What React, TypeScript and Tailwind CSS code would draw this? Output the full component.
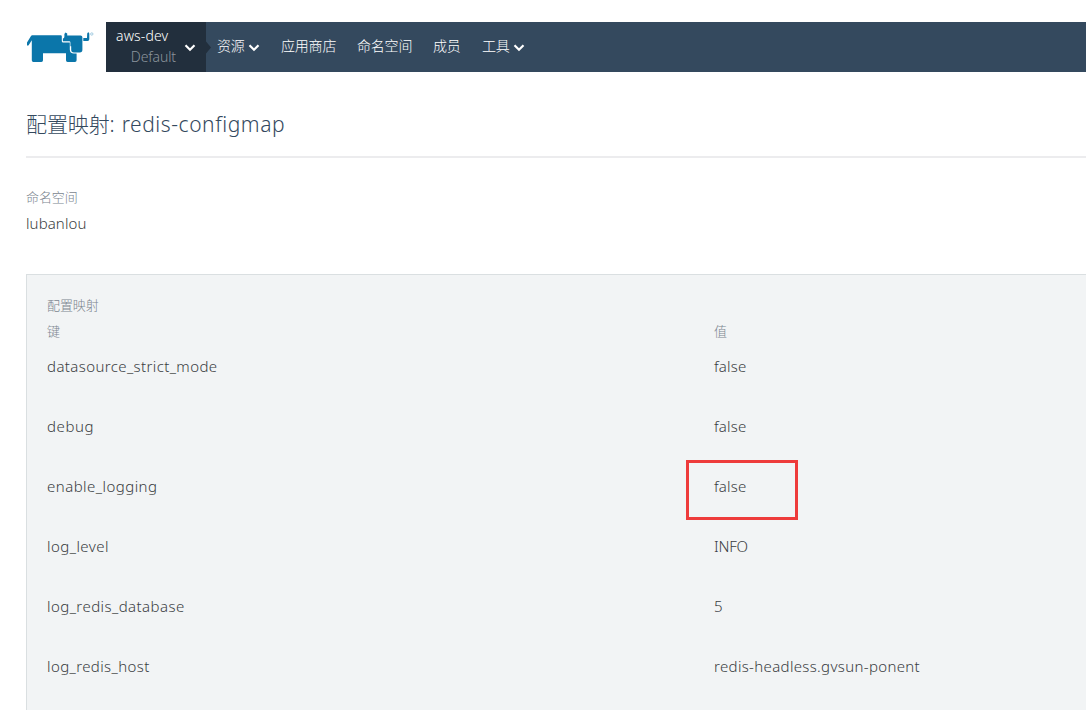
import React from "react";

const LATIN = "font-['Noto_Sans','Noto_Sans_CJK_SC',sans-serif]";

type Entry = { key: string; keyTracking: string; value: string; valueTracking: string; marked?: boolean };

const entries: Entry[] = [
  { key: "datasource_strict_mode", keyTracking: "tracking-[0.39px]", value: "false", valueTracking: "tracking-[0.2px]" },
  { key: "debug", keyTracking: "tracking-[0.6px]", value: "false", valueTracking: "tracking-[0.2px]" },
  { key: "enable_logging", keyTracking: "tracking-[0.46px]", value: "false", valueTracking: "tracking-[0.2px]", marked: true },
  { key: "log_level", keyTracking: "tracking-[0.45px]", value: "INFO", valueTracking: "tracking-[-0.2px]" },
  { key: "log_redis_database", keyTracking: "tracking-[0.44px]", value: "5", valueTracking: "tracking-normal" },
  { key: "log_redis_host", keyTracking: "tracking-[0.39px]", value: "redis-headless.gvsun-ponent", valueTracking: "tracking-[0.34px]" },
];

function Logo() {
  return (
    <svg className="block h-[50px] w-[106px] shrink-0" viewBox="0 22 106 50" aria-label="Rancher">
      <g fill="#0b76aa">
        <path d="M32.2 35.2H60.8Q61.8 35.2 61.8 36.2V41.2Q61.8 42.6 63.2 42.6H69.8V49.6Q69.8 53.6 73.8 53.6H76.6V60.3Q76.6 61.9 75 61.9H67.6Q66 61.9 66 60.3V53.2H43V60.3Q43 61.9 41.4 61.9H33.4Q31.8 61.9 31.8 60.3V40.2L28.6 45.2Q27.6 46.2 27 45V42.4L31 36Q31.5 35.2 32.2 35.2Z" />
        <path d="M64.4 34L65.4 32.4L67.2 33.6V35.4H80.6Q82.4 35.4 82.4 37.2V49.8Q82.4 52.4 79.8 52.4H73.8Q71.2 52.4 71.2 49.8V46.2H70.4V42.4Q70.4 41.2 69.2 41.2H62.9V38.6Q64.4 38.4 64.4 36.6Z" />
        <path d="M83.3 38H87L87.2 33.6L88.2 32L89.3 33.6V39.2Q89.3 40.9 87.6 40.9H83.3Z" />
      </g>
      <circle cx="91.8" cy="34" r="1.2" fill="none" stroke="#8fc0da" strokeWidth="0.8" />
    </svg>
  );
}

function Chevron() {
  return (
    <svg className="block h-[8px] w-[12px] shrink-0" viewBox="0 0 12 8" fill="none" stroke="#fff" strokeWidth="2.2">
      <path d="M1.5 1.3L6 5.8L10.5 1.3" />
    </svg>
  );
}

function Header() {
  return (
    <header className="flex h-[50px] w-full">
      <Logo />
      <div className="flex h-full flex-1 bg-[#34495e] text-white">
        <div className="flex h-full w-[100px] shrink-0 items-center bg-[#222f3d]">
          <div className="w-[70px] pb-[3px] pl-[10px] text-[14px] leading-[21px]">
            <div className="whitespace-nowrap tracking-[0.15px]">aws-dev</div>
            <div className="text-right font-light tracking-[-0.1px] text-[#8b949c]">Default</div>
          </div>
          <div className="pl-[8px] pt-px">
            <Chevron />
          </div>
        </div>
        <svg className="h-full w-[6px] shrink-0" viewBox="0 0 6 50">
          <path d="M0 19.5L5 25.5L0 31.5Z" fill="#222f3d" />
        </svg>
        <nav className="flex items-center whitespace-nowrap pb-[2px] pl-[5px] text-[14px] leading-5">
          <span className="flex w-[64px] items-center gap-[3px] tracking-[-0.2px]">资源<span className="pt-[3px]"><Chevron /></span></span>
          <span className="w-[76px] tracking-[-0.2px]">应用商店</span>
          <span className="w-[76px] tracking-[-0.2px]">命名空间</span>
          <span className="w-[49px] tracking-[-0.2px]">成员</span>
          <span className="flex items-center gap-[3px] tracking-[-0.2px]">工具<span className="pt-[3px]"><Chevron /></span></span>
        </nav>
      </div>
    </header>
  );
}

export default function App() {
  return (
    <div className={`h-[710px] w-full overflow-hidden bg-white pt-[22px] text-[15px] font-light text-[#3a3d42] ${LATIN}`}>
      <Header />
      <main className="pl-[26px]">
        <h1 className="flex h-[86px] items-center gap-[7px] whitespace-nowrap border-b-2 border-[#ececee] pt-[20px] text-[21px] leading-[30px] text-[#34495e]">
          <span className="tracking-[-0.1px]">配置映射:</span>
          <span className="tracking-[0.57px]">redis-configmap</span>
        </h1>
        <section className="flex h-[116px] flex-col pt-[29px]">
          <div className="text-[13px] leading-5 tracking-[-0.1px] text-[#7b858f]">命名空间</div>
          <div className="pt-[4px] leading-6"><span className="tracking-[0.1px]">lubanlou</span></div>
        </section>
        <section className="h-[440px] border-l border-t border-[#dadfe1] bg-[#f2f4f5] pl-5 pt-5">
          <div className="text-[13px] leading-5 tracking-[-0.1px] text-[#7b858f]">配置映射</div>
          <div className="flex pt-[6px] text-[13px] leading-5 text-[#7b858f]">
            <div className="w-[667px]">键</div>
            <div>值</div>
          </div>
          <div className="pt-[3px]">
            {entries.map((e) => (
              <div key={e.key} className="flex h-[60px] whitespace-nowrap pt-[10px] leading-6">
                <div className="w-[667px] shrink-0"><span className={e.keyTracking}>{e.key}</span></div>
                <div className="relative">
                  <span className={e.valueTracking}>{e.value}</span>
                  {e.marked && <div className="absolute -left-[28px] -top-[14px] h-[60px] w-[112px] border-[3px] border-[#ee3b3b]" />}
                </div>
              </div>
            ))}
          </div>
        </section>
      </main>
    </div>
  );
}
